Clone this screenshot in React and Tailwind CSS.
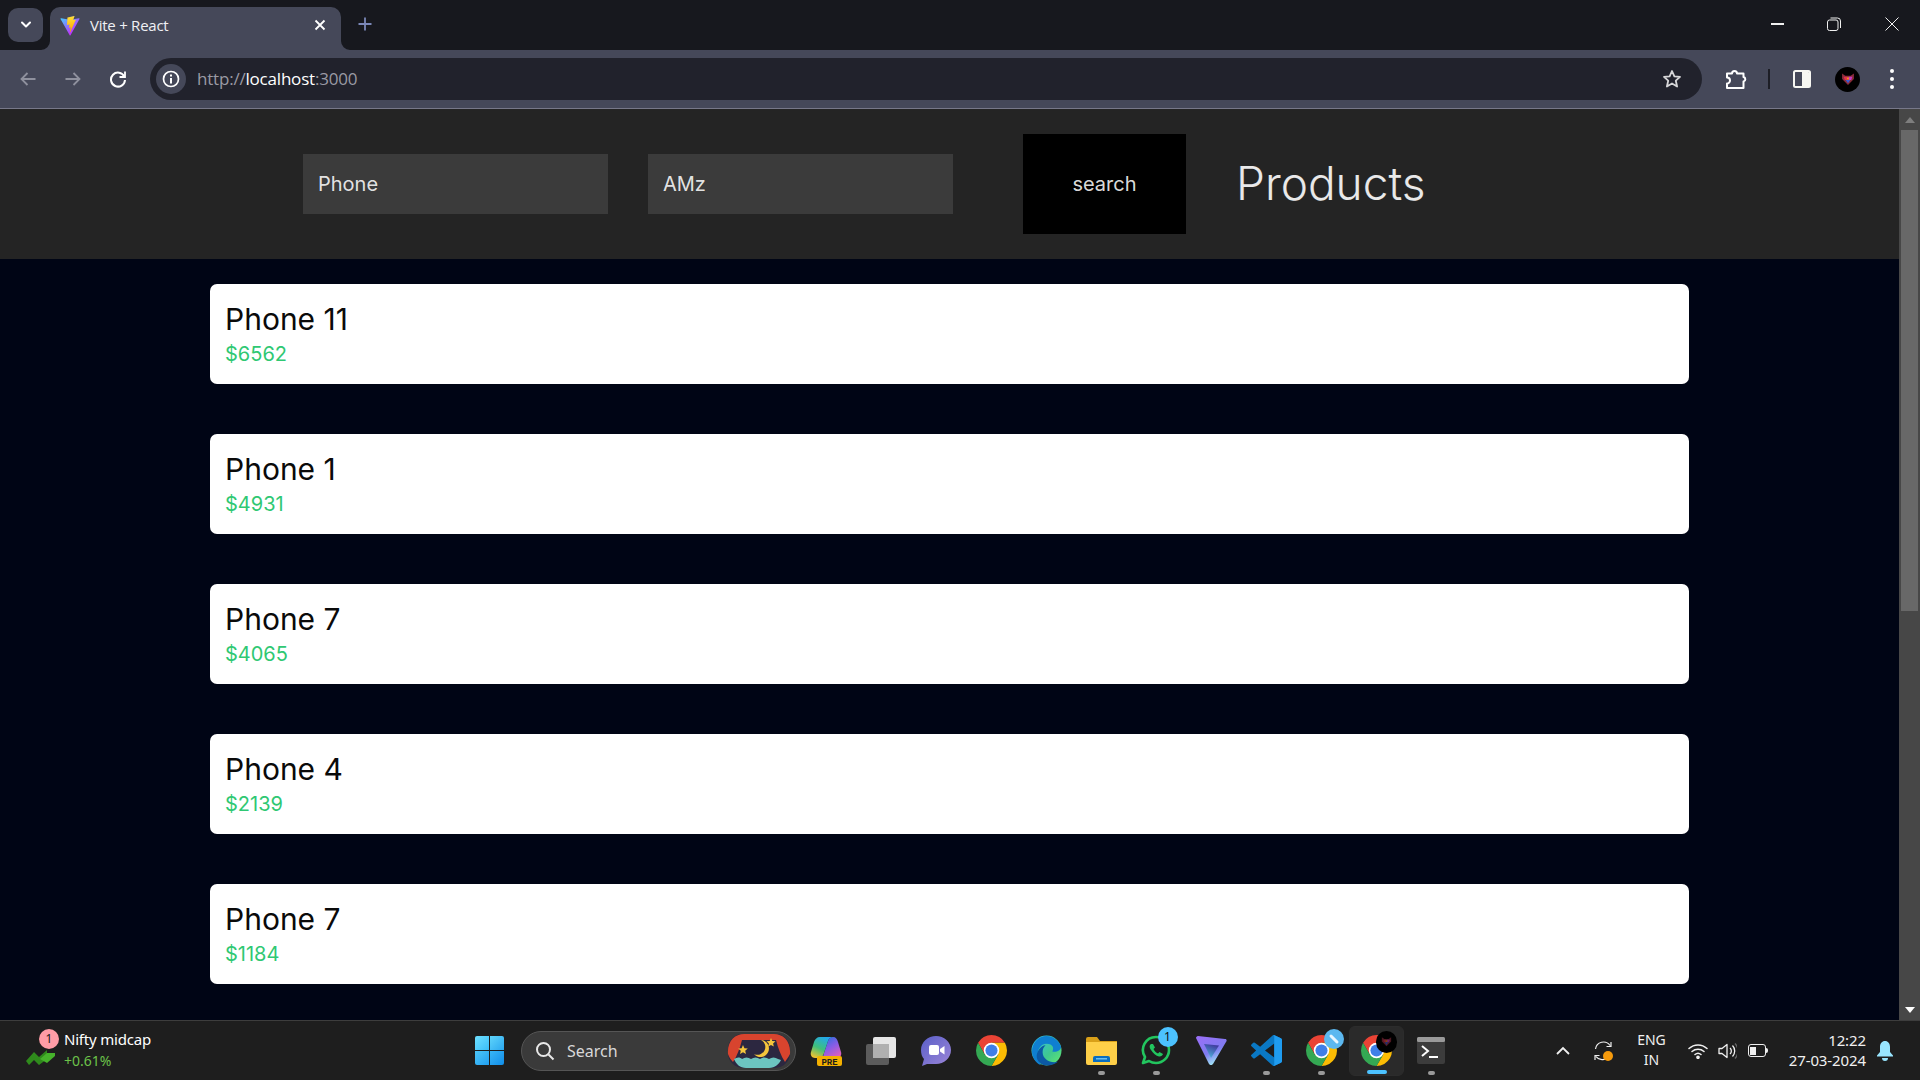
const Vite = ({ s = 20 }) => (
  <svg width={s} height={s} viewBox="0 0 410 404" preserveAspectRatio="none">
    <defs>
      <linearGradient id="va" x1="6" y1="33" x2="235" y2="344" gradientUnits="userSpaceOnUse"><stop stopColor="#41D1FF" /><stop offset="1" stopColor="#BD34FE" /></linearGradient>
      <linearGradient id="vb" x1="194" y1="8" x2="236" y2="293" gradientUnits="userSpaceOnUse"><stop stopColor="#FFEA83" /><stop offset=".08" stopColor="#FFDD35" /><stop offset="1" stopColor="#FFA800" /></linearGradient>
    </defs>
    <path d="M399.600 59.500 215.900 388.100c-3.800 6.800-13.600 6.800-17.500.1L11 59.500C6.900 52.200 13.100 43.300 21.400 44.800L205.300 77.700c1.200.2 2.400.2 3.500 0l180.100-32.800c8.300-1.500 14.500 7.300 10.700 14.600Z" fill="url(#va)" />
    <path d="M292.900 1.600 156.900 28.200c-2.200.4-3.900 2.300-4 4.600l-8.400 141.300c-.2 3.300 2.900 5.900 6.100 5.200l37.900-8.800c3.500-.8 6.700 2.300 6 5.900l-11.300 55.200c-.8 3.700 2.700 6.900 6.300 5.800l23.400-7.100c3.600-1.100 7.100 2.100 6.300 5.800l-17.900 86.500c-1.100 5.400 6.100 8.400 9.100 3.700l2-3.100L323.100 81.300c1.900-3.700-1.300-7.900-5.400-7.100l-38.800 7.500c-3.600.7-6.700-2.700-5.700-6.200l25.300-74c1-3.500-2-6.600-5.600-5.900Z" fill="url(#vb)" />
  </svg>
);

const Chrome = ({ s = 31 }) => (
  <svg width={s} height={s} viewBox="2 2 44 44">
    <path d="M4.950 13A22 22 0 0 1 43.050 13H24L14.470 29.500Z" fill="#EA4335" />
    <path d="M43.050 13A22 22 0 0 1 24 46L33.530 29.500 24 13Z" fill="#FBBC04" />
    <path d="M24 46A22 22 0 0 1 4.950 13L14.470 29.500H33.530Z" fill="#34A853" />
    <circle cx="24" cy="24" r="11" fill="#fff" />
    <circle cx="24" cy="24" r="8.600" fill="#3f7fe8" />
  </svg>
);

const Wolf = ({ s = 13, dim }) => (
  <svg width={s} height={s} viewBox="0 0 13 13" opacity={dim ? 0.55 : 1}>
    <path d="M1 1.500 4 3.500h5l3-2v5L6.500 12 1 6.500Z" fill="#8a2b3a" />
    <path d="M2.500 4.500h3.500v3H3.500Z" fill="#e0304a" />
    <path d="M7 4.500h3.500l-1 3H7Z" fill="#c23ac8" />
    <path d="M4.500 7.500h4L6.500 10.500Z" fill="#3a5fd8" />
    <path d="M5.500 5h2v2h-2Z" fill="#f08a20" />
  </svg>
);

const Slot = ({ children, dot, active }) => (
  <div className={active ? "relative flex h-[50px] w-[55px] items-center justify-center rounded-md border border-[#2c2c2c] bg-[#2a2a2a]" : "relative flex h-[50px] w-[55px] items-center justify-center"}>
    {children}
    {dot && <div className={active ? "absolute bottom-[1px] left-[17px] h-[4px] w-[20px] rounded-full bg-[#4cc2ff]" : "absolute bottom-[1px] left-[24px] h-[4px] w-[7px] rounded-full bg-[#9a9a9a]"} />}
  </div>
);

const products = [
  ["Phone 11", "$6562"],
  ["Phone 1", "$4931"],
  ["Phone 7", "$4065"],
  ["Phone 4", "$2139"],
  ["Phone 7", "$1184"],
];

export default function App() {
  return (
    <div className="flex h-[1080px] w-[1920px] flex-col overflow-hidden bg-[#000515] font-['Noto_Sans',sans-serif]">
      {/* tab strip */}
      <div className="flex h-[50px] shrink-0 items-end bg-[#17181e] pl-[8px]">
        <div className="mb-[8px] flex h-[34px] w-[35px] items-center justify-center rounded-[10px] bg-[#454859]">
          <svg width="12" height="8" viewBox="0 0 12 8" fill="none" stroke="#fff" strokeWidth="2" strokeLinecap="round" strokeLinejoin="round"><path d="m2 1.500 4 4 4-4" /></svg>
        </div>
        <div className="relative ml-[7px] flex h-[43px] w-[291px] items-center rounded-t-[10px] bg-[#454859] pb-[6px] pl-[10px]">
          <svg className="absolute bottom-0 left-[-9px]" width="9" height="9" viewBox="0 0 9 9"><path d="M9 0v9H0a9 9 0 0 0 9-9Z" fill="#454859" /></svg>
          <svg className="absolute bottom-0 right-[-9px]" width="9" height="9" viewBox="0 0 9 9"><path d="M0 0v9h9a9 9 0 0 1-9-9Z" fill="#454859" /></svg>
          <Vite s={20} />
          <span className="ml-[10px] font-['Open_Sans',sans-serif] text-[15px] leading-none tracking-[-0.25px] text-[#f0f0f4]">Vite + React</span>
          <svg className="absolute left-[264px] top-[12px]" width="12" height="12" viewBox="0 0 12 12" stroke="#fff" strokeWidth="1.800"><path d="m1.500 1.500 9 9M10.500 1.500l-9 9" /></svg>
        </div>
        <div className="mb-[19px] ml-[17px] flex">
          <svg width="14" height="14" viewBox="0 0 14 14" stroke="#7b87b8" strokeWidth="1.800"><path d="M7 .5v13M.5 7h13" /></svg>
        </div>
        <div className="mb-[19px] ml-auto flex items-center">
          <div className="h-[1.500px] w-[13px] bg-[#f0f0f0]" />
          <svg className="ml-[43px] -mt-[1px]" width="14" height="14" viewBox="0 0 14 14" fill="none" stroke="#f0f0f0" strokeWidth="1"><rect x=".5" y="3" width="10.500" height="10.500" rx="2" /><path d="M3.500 1h7a3 3 0 0 1 3 3v7" /></svg>
          <svg className="ml-[44px] mr-[21px]" width="14" height="14" viewBox="0 0 14 14" stroke="#f0f0f0" strokeWidth="1"><path d="m.5.500 13 13M13.500.5l-13 13" /></svg>
        </div>
      </div>

      {/* toolbar */}
      <div className="flex h-[59px] shrink-0 items-start border-b border-[#777889] bg-[#454859] pl-[5px] pt-[8px]">
        <div className="flex h-[42px] w-[45px] items-center justify-center">
          <svg width="16" height="14" viewBox="0 0 16 14" fill="none" stroke="#8f919e" strokeWidth="1.800"><path d="M15.500 7H1.500M7.500 1l-6 6 6 6" /></svg>
        </div>
        <div className="flex h-[42px] w-[45px] items-center justify-center">
          <svg width="16" height="14" viewBox="0 0 16 14" fill="none" stroke="#8f919e" strokeWidth="1.800"><path d="M.5 7h14M8.500 1l6 6-6 6" /></svg>
        </div>
        <div className="flex h-[42px] w-[45px] items-center justify-center">
          <svg width="18" height="18" viewBox="0 0 18 18" fill="none" stroke="#fff" strokeWidth="2"><path d="M15.300 6.500A7 7 0 1 0 16 10" /><path d="M16 1.500v5.500h-5.500" strokeWidth="1.800" /></svg>
        </div>
        <div className="ml-[10px] flex h-[42px] w-[1552px] items-center rounded-full bg-[#21222c] pl-[6px] pr-[20px]">
          <div className="flex h-[30px] w-[30px] items-center justify-center rounded-full bg-[#454859]">
            <svg width="18" height="18" viewBox="0 0 18 18" fill="none"><circle cx="9" cy="9" r="7.500" stroke="#fff" strokeWidth="1.700" /><rect x="8" y="8" width="2" height="5.500" fill="#fff" /><rect x="8" y="4.500" width="2" height="2" fill="#fff" /></svg>
          </div>
          <div className="ml-[11px] font-['Open_Sans',sans-serif] text-[17px] tracking-[-0.2px] text-[#9a9aa4]">
            http://<span className="text-white">localhost</span>:3000
          </div>
          <svg className="ml-auto" width="20" height="20" viewBox="0 0 20 20" fill="none" stroke="#d6d6d8" strokeWidth="1.800" strokeLinejoin="round"><path d="m10 2 2.400 5.400 5.600.5-4.200 3.800 1.300 5.800L10 14.500l-5.100 3 1.300-5.800L2 7.900l5.600-.5L10 2Z" /></svg>
        </div>
        <div className="flex h-[42px] items-center">
          <svg className="ml-[23px]" width="22" height="22" viewBox="0 0 22 22" fill="none" stroke="#fff" strokeWidth="2" strokeLinejoin="round"><path d="M2 5.500h5a2.500 2.500 0 0 1 5 0h6.500V9a2.300 2.300 0 0 1 0 4.500v6.500H2v-4.500a3 3 0 0 0 0-6V5.500Z" /></svg>
          <div className="ml-[21px] h-[20px] w-[2px] bg-[#1d1e26]" />
          <div className="ml-[23px] flex h-[18px] w-[18px] overflow-hidden rounded-[2.500px] border-2 border-[#f7f7f2]"><div className="w-[7px]" /><div className="flex-1 bg-[#f7f7f2]" /></div>
          <div className="ml-[24px] flex h-[25px] w-[25px] items-center justify-center rounded-full bg-black">
            <Wolf s={14} />
          </div>
          <div className="ml-[30px] flex flex-col gap-[4px]">
            <div className="h-[4px] w-[4px] rounded-full bg-white" />
            <div className="h-[4px] w-[4px] rounded-full bg-white" />
            <div className="h-[4px] w-[4px] rounded-full bg-white" />
          </div>
        </div>
      </div>

      {/* page + scrollbar */}
      <div className="flex min-h-0 flex-1">
        <div className="min-w-0 flex-1 font-['Inter',sans-serif]">
          <div className="flex h-[150px] items-center bg-[#242424] pl-[303px]">
            <div className="flex h-[60px] w-[305px] items-center bg-[#3b3b3b] pl-[15px] text-[20px] text-white/87">Phone</div>
            <div className="ml-[40px] flex h-[60px] w-[305px] items-center bg-[#3b3b3b] pl-[15px] text-[20px] text-white/87">AMz</div>
            <div className="ml-[70px] flex h-[100px] w-[163px] items-center justify-center bg-black text-[20px] text-white/87">search</div>
            <div className="mb-[2px] ml-[50px] text-[46px] font-light leading-none text-white/90">Products</div>
          </div>
          <div className="flex flex-col gap-[50px] pl-[210px] pt-[25px]">
            {products.map(([name, price], i) => (
              <div key={i} className="flex h-[100px] w-[1479px] flex-col rounded-[7px] bg-white pl-[15px] pt-[17px]">
                <div className="text-[30px] leading-[36px] text-[#0a0a0a]">{name}</div>
                <div className="mt-[3px] text-[20px] leading-[28px] text-[#2fc873]">{price}</div>
              </div>
            ))}
          </div>
        </div>
        <div className="flex w-[21px] shrink-0 flex-col bg-[#474747]">
          <div className="flex h-[21px] items-center justify-center">
            <svg width="10" height="6" viewBox="0 0 10 6"><path d="M5 0 10 6H0Z" fill="#7e7e7e" /></svg>
          </div>
          <div className="mx-[2px] h-[481px] bg-[#686868]" />
          <div className="mt-auto flex h-[21px] items-center justify-center">
            <svg width="10" height="6" viewBox="0 0 10 6"><path d="M5 6 10 0H0Z" fill="#ffffff" /></svg>
          </div>
        </div>
      </div>

      {/* taskbar */}
      <div className="flex h-[60px] shrink-0 items-center border-t border-[#3d3d3d] bg-[#1e1e1e] text-white">
        <div className="relative ml-[26px] flex h-[40px] w-[140px] items-center">
          <svg className="mt-[14px]" width="29" height="16" viewBox="0 0 29 16" fill="#2f8a1c"><path d="M0 11 8 2l5 5 8-7v9l-8 6-5-5-5 5Z" /><path d="m14 9 7-6 8 0v3l-8 7Z" fill="#46b32b" /></svg>
          <div className="absolute left-[13px] top-[-2px] flex h-[20px] w-[20px] items-center justify-center rounded-full bg-[#ff9ca6] text-[12px] leading-none text-[#1a1a1a]">1</div>
          <div className="ml-[9px] flex flex-col">
            <div className="-mt-[2px] text-[15px] leading-[20px] tracking-[-0.2px]">Nifty midcap</div>
            <div className="mt-[2px] text-[14px] leading-[20px] text-[#6cc24a]">+0.61%</div>
          </div>
        </div>

        <div className="ml-[309px] grid h-[29px] w-[29px] grid-cols-2 gap-[1px]">
          <div className="rounded-tl-[2px] bg-gradient-to-br from-[#6ee0ff] to-[#38bdf8]" />
          <div className="rounded-tr-[2px] bg-gradient-to-br from-[#5ed4fb] to-[#2aa8f0]" />
          <div className="rounded-bl-[2px] bg-gradient-to-br from-[#4cc6f8] to-[#1f9ff0]" />
          <div className="rounded-br-[2px] bg-gradient-to-br from-[#38b6f6] to-[#0f8de8]" />
        </div>

        <div className="ml-[17px] flex h-[40px] w-[275px] items-center rounded-full border border-[#555] bg-[#3a3a3a] pl-[13px]">
          <svg width="20" height="20" viewBox="0 0 20 20" fill="none" stroke="#e8e8e8" strokeWidth="2"><circle cx="8.500" cy="8.500" r="6.500" /><path d="m13.500 13.500 5 5" /></svg>
          <span className="ml-[12px] text-[16px] leading-none text-[#d8d8d8]">Search</span>
          <svg className="ml-auto mr-[3px]" width="66" height="34" viewBox="0 0 66 34">
            <rect x="2" y="0" width="62" height="34" rx="15" fill="#2c2740" />
            <path d="M2 20C1 7 9 0 18 0h30c9 0 17 7 16 20-2 4-4 6-5 8-4-6-7-14-9-22H16c-2 8-5 16-9 22-2-2-4-5-5-8Z" fill="#d8442e" />
            <path d="M8 25c3-2 6-2 8 0 3-2 6-2 9 0 3-2 6-2 9 0 3-2 6-2 9 0 3-2 6-2 9 0l3 1c-2 4-6 8-12 8H20C14 34 10 30 8 25Z" fill="#6cc5c0" />
            <path d="M35 6a8.500 8.500 0 1 1-7 14 7 7 0 0 0 7-14Z" fill="#f5c53c" />
            <path d="m17 11 1.400 3.200 3.400.3-2.600 2.200.8 3.300-3-1.700-3 1.700.8-3.300-2.600-2.200 3.400-.3ZM45 4l1.300 3 3.200.3-2.400 2.100.7 3.100-2.800-1.600-2.800 1.600.7-3.100-2.400-2.100 3.200-.3Z" fill="#f5c53c" />
          </svg>
        </div>

        <div className="ml-[2.500px] flex items-center">
          <Slot>
            <svg width="32" height="31" viewBox="0 0 32 31">
              <defs>
                <linearGradient id="cpl" x1="0.700" y1="0" x2="0.200" y2="1"><stop stopColor="#22a7f0" /><stop offset=".55" stopColor="#3fc07a" /><stop offset="1" stopColor="#f2c230" /></linearGradient>
                <linearGradient id="cpr" x1="0.200" y1="0" x2="0.800" y2="1"><stop stopColor="#2a6fe0" /><stop offset=".5" stopColor="#8a5ce6" /><stop offset="1" stopColor="#e45fb8" /></linearGradient>
              </defs>
              <path d="M18 6C19 3 21 2 23 2 26 2 27 4 28 7L31 17C32 20 30 23 27 23H11C13 23 13.500 20 14 18Z" fill="url(#cpr)" />
              <path d="M10 2C7 2 5 4 4 7L1 17C0 20 2 23 5 23H9C12 23 13 21 14 18L18 6C19 3 21 2 23 2Z" fill="url(#cpl)" />
              <rect x="7" y="21" width="25" height="10" rx="2" fill="#f4b000" />
              <text x="19.500" y="29.500" textAnchor="middle" fontSize="9" fontWeight="700" fill="#1b1b1b" fontFamily="Liberation Mono">PRE</text>
            </svg>
          </Slot>
          <Slot>
            <div className="relative h-[28px] w-[30px]">
              <div className="absolute bottom-0 left-0 h-[21px] w-[23px] rounded-[2px] bg-[#5c5c5c]" />
              <div className="absolute right-0 top-0 h-[21px] w-[23px] rounded-[2px] bg-[#e6e6e6]" />
              <div className="absolute left-[7px] top-[7px] h-[14px] w-[16px] bg-[#b0b0b0]" />
            </div>
          </Slot>
          <Slot>
            <svg width="30" height="30" viewBox="0 0 30 30"><defs><linearGradient id="mt" x1="0" y1="0" x2="1" y2="1"><stop stopColor="#5a5fc8" /><stop offset="1" stopColor="#9c86d8" /></linearGradient></defs><path d="M15 0c8 0 15 6 15 14s-7 14-15 14H6l-5 2 2-7C1 21 0 18 0 14 0 6 7 0 15 0Z" fill="url(#mt)" /><rect x="8" y="9" width="10" height="10" rx="2" fill="#fff" /><path d="m19 13 4.500-3v8.500L19 15.500Z" fill="#fff" /></svg>
          </Slot>
          <Slot><Chrome /></Slot>
          <Slot>
            <svg width="31" height="31" viewBox="0 0 32 32">
              <defs>
                <linearGradient id="eg" x1="0" y1="0" x2="1" y2="1"><stop stopColor="#35c1f1" /><stop offset=".6" stopColor="#3fc88f" /><stop offset="1" stopColor="#66eb6e" /></linearGradient>
              </defs>
              <circle cx="16" cy="16" r="15.500" fill="url(#eg)" />
              <path d="M1 17C1 8 8 1 16 1c7 0 13 5 15 11 0 4-5 6-9 5 2-3 1-8-6-8-6 0-10 6-9 14l3 8C5 29 1 23 1 17Z" fill="#0f7fd0" />
              <path d="M12 18c0 6 6 10 12 10 2 0 4-.5 5-1.500-3 3-8 5-13 5-4 0-9-3-10-8-1-7 5-13 9-13-2 2-3 4-3 7Z" fill="#0c59a4" />
            </svg>
          </Slot>
          <Slot dot>
            <svg width="31" height="28" viewBox="0 0 31 28"><path d="M0 2a2 2 0 0 1 2-2h9l3 4h17v3H0Z" fill="#d9a019" /><path d="M0 5h31v21a2 2 0 0 1-2 2H2a2 2 0 0 1-2-2Z" fill="#fecf48" /><path d="M7 25v-4a2 2 0 0 1 2-2h13a2 2 0 0 1 2 2v4Z" fill="#0a6ec0" /><rect x="10" y="21" width="11" height="1.500" fill="#6cc0f0" /></svg>
          </Slot>
          <Slot dot>
            <svg width="30" height="31" viewBox="0 0 30 31" fill="none"><path d="M15 2a13 13 0 0 1 0 26c-2.500 0-5-.7-7-2l-6 2 2-6A13 13 0 0 1 15 2Z" stroke="#22c55e" strokeWidth="2.600" strokeLinejoin="round" /><path d="M10 9c-1.500 1-2 3 0 6s5 6 8 6.500c2 .3 3.500-1 4-2.500l-3.500-2-1.500 1.500c-2-1-3.500-2.500-4.500-4.500L14 12.500 12 9Z" fill="#22c55e" /></svg>
            <div className="absolute left-[29px] top-[1px] flex h-[20px] w-[20px] items-center justify-center rounded-full bg-[#4cc2ff] text-[12px] leading-none text-[#101010]">1</div>
          </Slot>
          <Slot>
            <svg width="31" height="29" viewBox="0 0 31 29">
              <defs>
                <linearGradient id="pv" x1="0.100" y1="0" x2="0.600" y2="1"><stop stopColor="#9a6ff8" /><stop offset=".6" stopColor="#7f7cf0" /><stop offset="1" stopColor="#a3eef5" /></linearGradient>
                <linearGradient id="pi" x1="0.800" y1="0" x2="0.400" y2="1"><stop stopColor="#3f2f9a" /><stop offset="1" stopColor="#4fb0d8" /></linearGradient>
              </defs>
              <path d="M0 2c0-1 1-2 2-2l27 3c2 0 2 2 1 3L17 28c-1 1.500-3 1.500-4 0Z" fill="url(#pv)" />
              <path d="M8 8 23 9.500 15 22Z" fill="url(#pi)" />
            </svg>
          </Slot>
          <Slot dot>
            <svg width="31" height="31" viewBox="0 0 100 100">
              <path d="M96.500 10.800 75.900.9a6.200 6.200 0 0 0-7.100 1.200L29.500 38 12.400 25a4.200 4.200 0 0 0-5.300.2L1.600 30.300a4.200 4.200 0 0 0 0 6.200L16.400 50 1.600 63.500a4.200 4.200 0 0 0 0 6.200l5.500 5a4.200 4.200 0 0 0 5.300.2L29.500 62 68.800 97.900a6.200 6.200 0 0 0 7.100 1.200l20.600-9.900A6.200 6.200 0 0 0 100 83.600V16.400a6.200 6.200 0 0 0-3.500-5.600ZM75 72.700 45.200 50 75 27.300Z" fill="#0a78c4" />
              <path d="M70.900.7a6.200 6.200 0 0 1 5 .2l20.600 9.900a6.200 6.200 0 0 1 3.500 5.600v67.200a6.200 6.200 0 0 1-3.500 5.600l-20.600 9.900a6.200 6.200 0 0 1-5 .2c2.300.9 4.100-.8 4.100-3.300V4c0-2.500-1.800-4.200-4.100-3.300Z" fill="#1f9cf0" />
            </svg>
          </Slot>
          <Slot dot>
            <Chrome />
            <div className="absolute left-[30px] top-[3px] flex h-[20px] w-[20px] items-center justify-center rounded-full bg-[#5cb8f0]">
              <svg width="12" height="12" viewBox="0 0 12 12" fill="none" stroke="#e8f6ff" strokeWidth="3" strokeLinecap="round"><path d="M3 3l6 6" /></svg>
            </div>
          </Slot>
          <Slot dot active>
            <Chrome />
            <div className="absolute left-[26px] top-[4px] flex h-[22px] w-[21px] items-center justify-center rounded-full bg-black">
              <Wolf s={11} dim />
            </div>
          </Slot>
          <Slot dot>
            <svg width="28" height="27" viewBox="0 0 28 27"><rect width="28" height="27" rx="2" fill="#3c3c3c" /><rect width="28" height="5" rx="1.500" fill="#9a9a9a" /><path d="m5 9 6 5-6 5" fill="none" stroke="#fff" strokeWidth="2" /><rect x="12" y="19" width="9" height="2" fill="#fff" /></svg>
          </Slot>
        </div>

        <svg className="ml-[97px]" width="14" height="9" viewBox="0 0 14 9" fill="none" stroke="#f0f0f0" strokeWidth="1.800"><path d="m1 8 6-6 6 6" /></svg>
        <div className="relative ml-[23px] h-[20px] w-[20px]">
          <svg width="20" height="20" viewBox="0 0 20 20" fill="none" stroke="#f0f0f0" strokeWidth="1.200"><path d="M2.500 8A8 8 0 0 1 17 4.500M18 1v4.500h-4.500M17 12.500A8 8 0 0 1 3 15.500M2 19v-4.500h4.500" /></svg>
          <div className="absolute left-[10px] top-[10px] h-[10px] w-[10px] rounded-full bg-[#f59a0c]" />
        </div>
        <div className="-mt-[2px] ml-[21px] flex w-[36px] flex-col items-center text-[14px] leading-[20px] text-[#f0f0f0]"><div>ENG</div><div>IN</div></div>
        <svg className="ml-[18px]" width="20" height="16" viewBox="0 0 20 16" fill="none" stroke="#f0f0f0" strokeWidth="1.500" strokeLinecap="round"><path d="M1 5.500a13 13 0 0 1 18 0M4 8.500a9 9 0 0 1 12 0M7 11.500a4.500 4.500 0 0 1 6 0" /><circle cx="10" cy="14.300" r="1.100" fill="#f0f0f0" /></svg>
        <svg className="ml-[10px]" width="19" height="18" viewBox="0 0 19 18" fill="none" stroke="#f0f0f0" strokeWidth="1.300"><path d="M1 6.500h3L9 2.500v13L4 11.500H1Z" strokeLinejoin="round" /><path d="M12 6a4 4 0 0 1 0 6" /><path d="M14.500 3.500a8 8 0 0 1 0 11" /><path d="M17 1.500a11 11 0 0 1 0 15" stroke="#666" /></svg>
        <div className="ml-[11px] flex items-center">
          <div className="flex h-[13px] w-[18px] items-center rounded-[3px] border-[1.500px] border-[#f0f0f0] p-[1.500px]"><div className="h-full w-[6px] bg-[#f0f0f0]" /></div>
          <div className="h-[5px] w-[2px] rounded-r-sm bg-[#f0f0f0]" />
        </div>
        <div className="-mt-[2px] ml-auto flex flex-col items-end text-[15px] leading-[20px] tracking-[-0.1px] text-[#f0f0f0]"><div>12:22</div><div>27-03-2024</div></div>
        <svg className="ml-[11px] mr-[27px]" width="16" height="20" viewBox="0 0 16 20" fill="#99e6ff"><path d="M8 0c3 0 5 2.500 5 6v5l3 3.500v1H0v-1L3 11V6c0-3.500 2-6 5-6Z" /><path d="M5 17h6a3 3 0 0 1-6 0Z" /></svg>
      </div>
    </div>
  );
}
